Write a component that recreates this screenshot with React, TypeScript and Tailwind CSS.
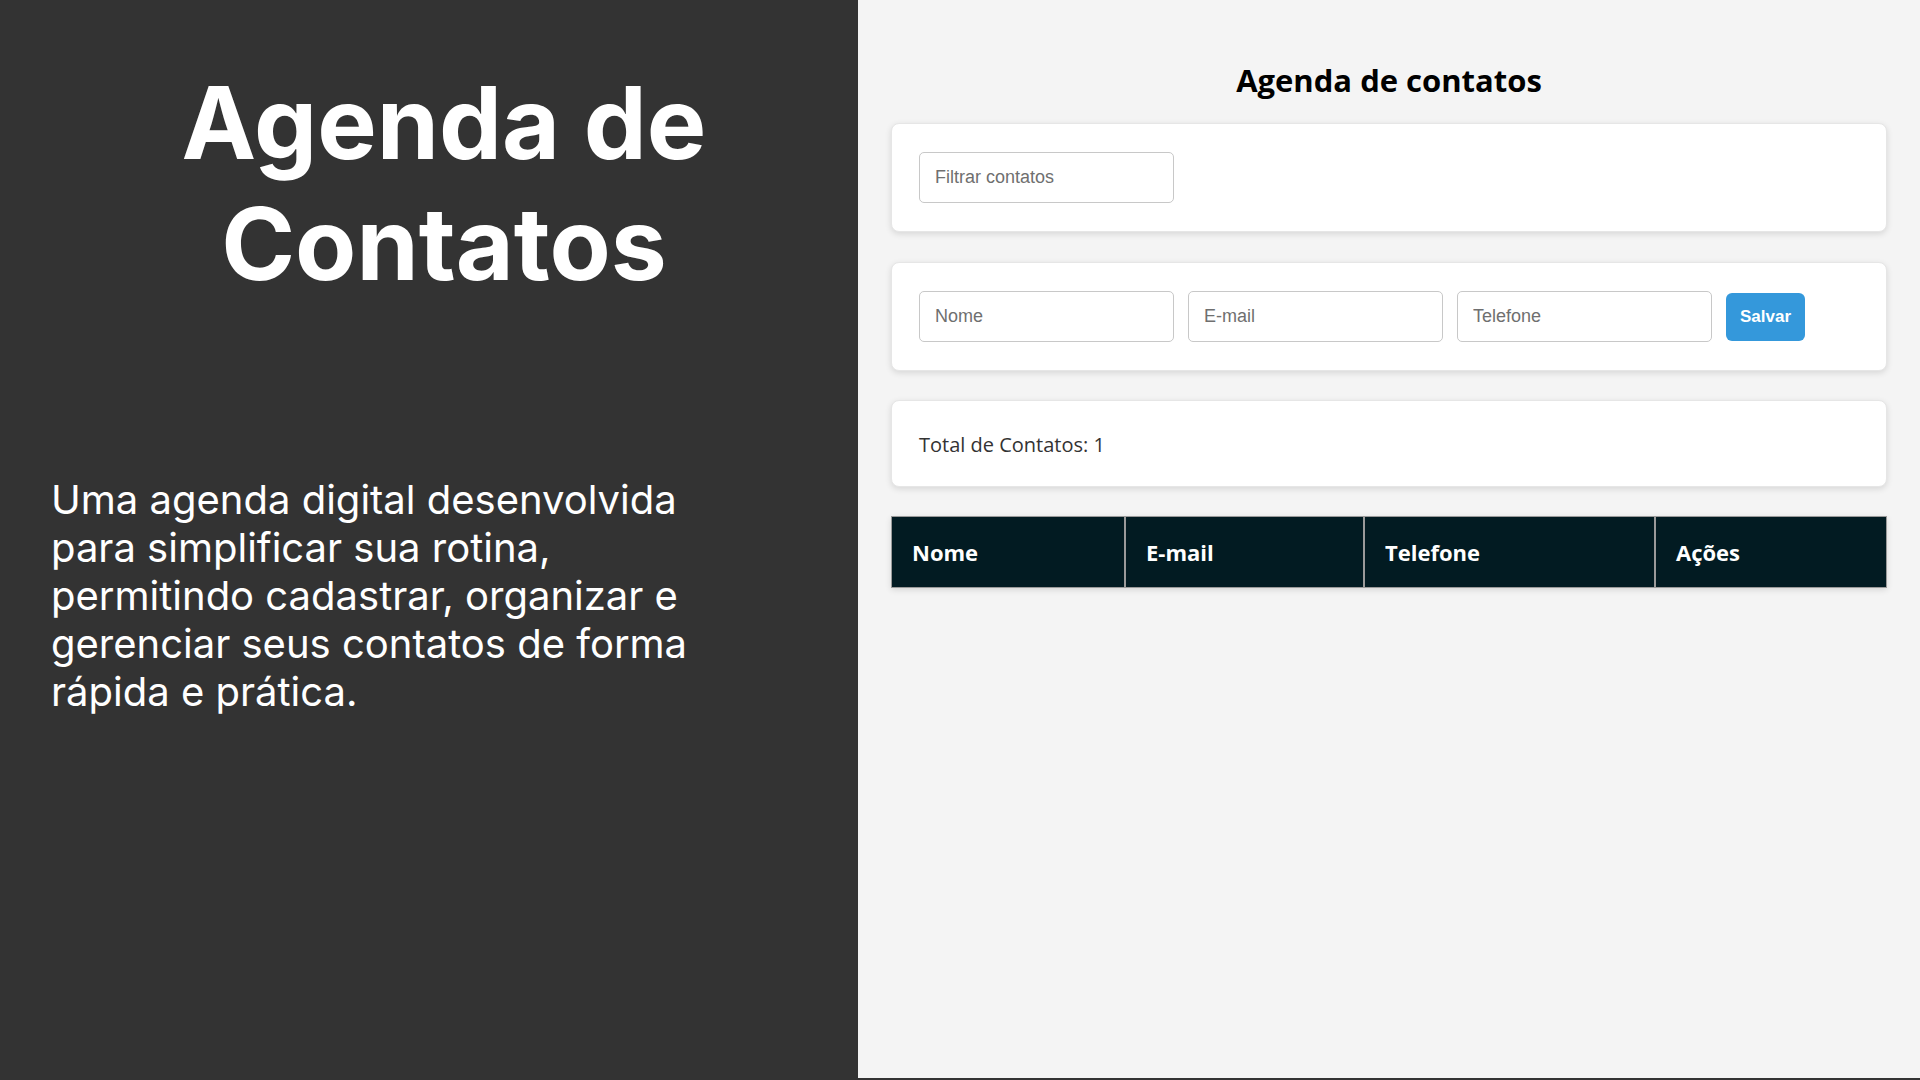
import { type ReactNode } from "react";

const columns = [
  { label: "Nome", width: "w-[232px]" },
  { label: "E-mail", width: "w-[239px]" },
  { label: "Telefone", width: "w-[291px]" },
  { label: "Ações", width: "flex-1" },
];

function Card({ children, className = "" }: { children: ReactNode; className?: string }) {
  return (
    <div
      className={`rounded-[8px] border border-[#e6e6e6] bg-white shadow-[0_2px_6px_rgba(0,0,0,0.12)] ${className}`}
    >
      {children}
    </div>
  );
}

function Field({ placeholder }: { placeholder: string }) {
  return (
    <input
      type="text"
      placeholder={placeholder}
      className="h-[51px] w-[255px] rounded-[5px] border border-[#c8c8c8] bg-white pl-[15px] font-['Liberation_Sans',Arial,sans-serif] text-[18px] text-[#333] outline-none placeholder:text-[#6f6f6f]"
    />
  );
}

export default function App() {
  return (
    <div className="flex h-screen w-full bg-[#333333]">
      {/* painel de apresentação */}
      <div className="w-[858px] shrink-0 bg-[#333333] font-['Inter',sans-serif] text-white">
        <h1 className="pl-[30px] pt-[62px] text-center text-[100px] font-bold leading-[121px]">
          Agenda de Contatos
        </h1>
        <p className="ml-[51px] mt-[172px] w-[700px] text-[40px] leading-[48px]">
          Uma agenda digital desenvolvida para simplificar sua rotina, permitindo cadastrar,
          organizar e gerenciar seus contatos de forma rápida e prática.
        </p>
      </div>

      {/* captura da aplicação */}
      <div className="h-[1078px] flex-1 bg-[#f4f4f4] px-[33px] pt-[60px] font-['Open_Sans',sans-serif]">
        <h2 className="mb-[23px] text-center text-[31px] font-bold leading-[40px] text-black">
          Agenda de contatos
        </h2>

        <Card className="mb-[30px] px-[27px] py-[28px]">
          <Field placeholder="Filtrar contatos" />
        </Card>

        <Card className="mb-[29px] px-[27px] py-[28px]">
          <div className="flex items-center gap-[14px]">
            <Field placeholder="Nome" />
            <Field placeholder="E-mail" />
            <Field placeholder="Telefone" />
            <button
              type="button"
              className="h-[48px] rounded-[6px] bg-[#3498db] px-[14px] font-['Liberation_Sans',Arial,sans-serif] text-[17px] font-bold text-white"
            >
              Salvar
            </button>
          </div>
        </Card>

        <Card className="mb-[29px] px-[27px] pb-[27px] pt-[30px]">
          <p className="text-[20px] leading-[28px] text-[#333]">Total de Contatos: 1</p>
        </Card>

        <div className="flex h-[72px] border border-[#9a9a9a] bg-[#021b22] shadow-[0_2px_6px_rgba(0,0,0,0.12)]">
          {columns.map((col, i) => (
            <div
              key={col.label}
              className={`flex items-center pl-[20px] text-[22px] font-bold text-white ${col.width} ${
                i > 0 ? "border-l-2 border-[#9a9a9a]" : ""
              }`}
            >
              {col.label}
            </div>
          ))}
        </div>
      </div>
    </div>
  );
}
